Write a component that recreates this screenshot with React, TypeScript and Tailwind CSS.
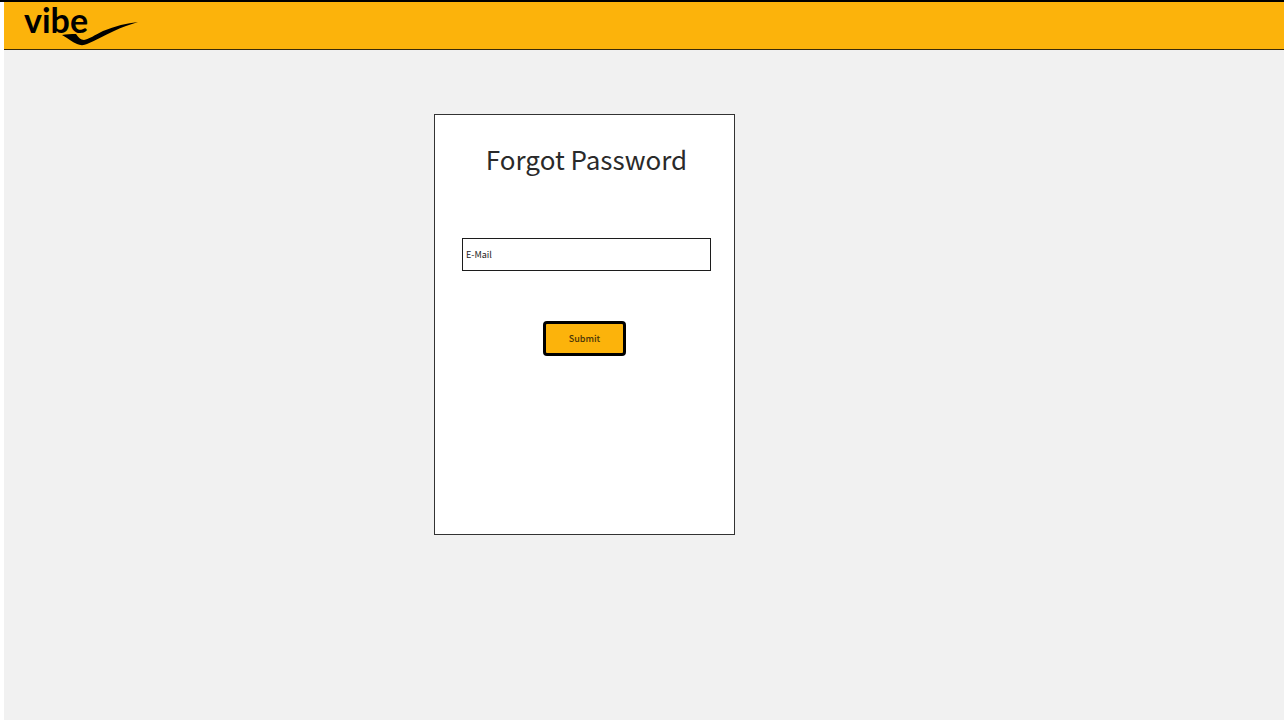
import React from "react";

function Logo() {
  return (
    <svg width="120" height="46" viewBox="0 0 120 46" role="img" aria-label="vibe" className="overflow-visible">
      <text x="0" y="31" className="fill-black font-['Lato',sans-serif] text-[34px] font-bold">
        vibe
      </text>
      <path
        d="M38 33C42 32 47 32 52 32C54 35 57 38 60 38C65 37 71 33 79 29C91 24 103 21 114 20C106 22.500 98 25 90 29C80 33.500 71 38.500 63 42C60 43.500 56 43.500 53 42C48 40 44 36 38 33Z"
        fill="#000"
      />
    </svg>
  );
}

export default function App() {
  return (
    <div className="flex min-h-screen flex-col border-t-2 border-black bg-white pl-1 font-['Noto_Sans_CJK_SC',sans-serif] text-[#2a2a2a]">
      <header className="flex h-12 items-start border-b border-[#3a2a08] bg-[#fcb30b] pl-5">
        <a href="#" className="block">
          <Logo />
        </a>
      </header>
      <main className="flex flex-1 items-start justify-center bg-[#f1f1f1] pt-16 pr-[119px]">
        <form
          className="flex h-[421px] w-[301px] flex-col items-center border border-[#333] bg-white pt-6"
          onSubmit={(e) => e.preventDefault()}
        >
          <h1 className="pl-1 text-[26px] leading-[40px]">Forgot Password</h1>
          <input
            type="email"
            aria-label="E-Mail"
            placeholder="E-Mail"
            className="mt-[59px] ml-1 h-[33px] w-[249px] border border-[#1c1c1c] bg-white px-[3px] text-[9px] outline-none placeholder:text-[#222] placeholder:opacity-100"
          />
          <button
            type="submit"
            className="mt-[50px] h-[35px] w-[83px] rounded border-[3px] border-black bg-[#fcb30b] text-[9px] font-medium text-[#4a3508]"
          >
            Submit
          </button>
        </form>
      </main>
    </div>
  );
}
